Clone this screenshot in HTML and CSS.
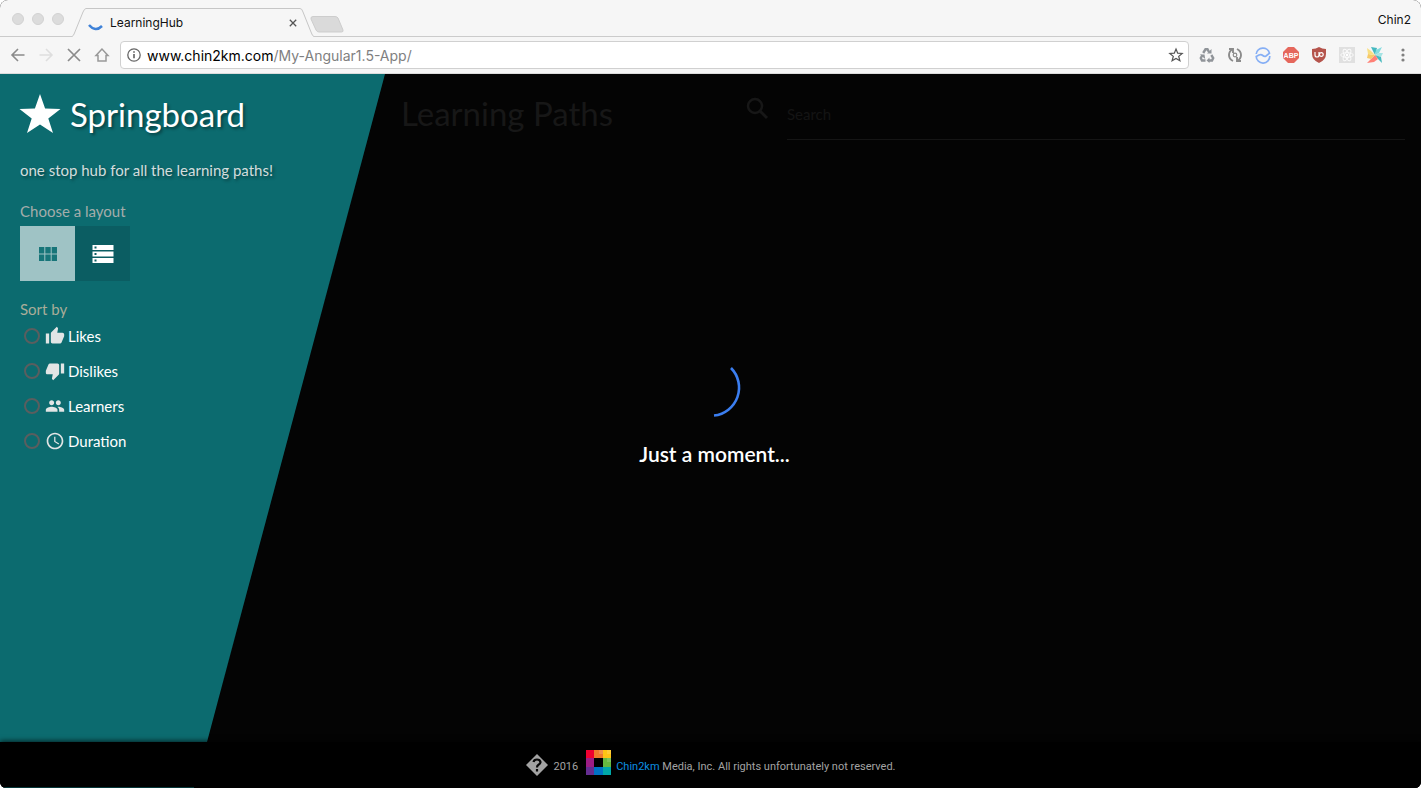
FILE: index.html
```html
<!DOCTYPE html>
<html lang="en">
<head>
<meta charset="utf-8">
<title>LearningHub</title>
<link rel="stylesheet" href="styles.css">
</head>
<body>
<div class="window">
  <div class="titlebar">
    <div class="lights"><span class="light"></span><span class="light"></span><span class="light"></span></div>
    <div class="tab">
      <svg class="tab-shape" width="242" height="29" viewBox="0 0 242 29"><path d="M0 28.5C2 28 3 25 4 22L11 4Q12.500 .5 14 .5H228Q230 .5 231 4L238 22Q240 28 242 28.500V29H0Z" fill="#f6f6f6"/><path d="M0 28.500Q1.500 28 2.500 25L11 4Q12.500 .5 14 .5H228Q230 .5 231 4L239 24Q240.500 28.500 242 28.500" fill="none" stroke="#c6c6c6"/></svg>
      <svg class="tab-icon" width="16" height="16" viewBox="0 0 16 16"><path d="M1 10Q7.500 17.500 14 11" fill="none" stroke="#3f82d8" stroke-width="2.500"/></svg>
      <span class="tab-title">LearningHub</span>
      <button class="tab-close" aria-label="Close tab"><svg width="8" height="8" viewBox="0 0 8 8"><path d="M.8.8l6.400 6.400M7.200.8L.8 7.200" stroke="#555" stroke-width="1.300"/></svg></button>
    </div>
    <button class="new-tab" aria-label="New tab"><svg width="34" height="17" viewBox="0 0 34 17"><path d="M3 .5H25Q27 .5 28 2L33 14Q33.500 16 31.500 16H9Q7 16 6 14L1 3Q.5.5 3 .5Z" fill="#dadada" stroke="#cdcdcd"/></svg></button>
    <span class="profile">Chin2</span>
  </div>
  <div class="toolbar">
    <div class="nav">
      <button aria-label="Back"><svg width="16" height="16" viewBox="0 0 16 16"><path d="M14.500 8H2.500M8 2L2 8l6 6" fill="none" stroke="#8b8b8b" stroke-width="1.600"/></svg></button>
      <button aria-label="Forward"><svg width="16" height="16" viewBox="0 0 16 16"><path d="M1.500 8h12M8 2l6 6-6 6" fill="none" stroke="#dedede" stroke-width="1.600"/></svg></button>
      <button aria-label="Stop"><svg width="16" height="16" viewBox="0 0 16 16"><path d="M2 2l12 12M14 2L2 14" stroke="#8b8b8b" stroke-width="1.700"/></svg></button>
      <button aria-label="Home"><svg width="16" height="16" viewBox="0 0 16 16"><path d="M8 2L2 8.500h2V14h8V8.500h2z" fill="none" stroke="#999" stroke-width="1.500"/></svg></button>
    </div>
    <div class="address">
      <svg width="14" height="14" viewBox="0 0 14 14"><circle cx="7" cy="7" r="6.200" fill="none" stroke="#666" stroke-width="1.300"/><path d="M7 6v4.300M7 3.300v1.500" stroke="#555" stroke-width="1.500"/></svg>
      <a class="url" href="#"><span class="host">www.chin2km.com</span>/My-Angular1.5-App/</a>
      <button aria-label="Bookmark this page"><svg width="14" height="14" viewBox="0 0 14 14"><path d="M7 1l1.700 4.200 4.500.3-3.500 2.900 1.200 4.400L7 10.400l-3.900 2.400 1.200-4.400L.8 5.500l4.500-.3z" fill="none" stroke="#555" stroke-width="1.200"/></svg></button>
    </div>
    <div class="extensions">
      <button aria-label="Recycle"><svg width="16" height="16" viewBox="0 0 16 16" fill="none" stroke="#909499" stroke-width="2.400"><path d="M4.200 6L6.500 2.300h2L10 5M12.300 8l1.900 3-1.200 2.500H10M6.500 13.500H3L1.800 11 3.500 8"/><path d="M8 6.500h4.500V2zM10.500 10.500v5.500L7.500 13.400zM.8 7.500h4.700L6.200 12z" fill="#909499" stroke="none"/></svg></button>
      <button aria-label="Sync"><svg width="16" height="16" viewBox="0 0 16 16" fill="none" stroke="#8b8b8b" stroke-width="1.900"><path d="M6 14Q2 12 2 8t4-6M10 2q4 2 4 6t-4 6M2 2h4v4M14 14h-4v-4"/><circle cx="8" cy="8" r="1.800" stroke-width="1.200"/></svg></button>
      <button aria-label="Waves"><svg width="16" height="16" viewBox="0 0 16 16" fill="none" stroke="#86aff5" stroke-width="1.700"><path d="M1.200 7a6.800 6.800 0 0 1 13.300-.8L11 9Q9.500 10 7.800 8.500T4 8L1.200 9.500a6.800 6.800 0 0 0 13.600-.5"/></svg></button>
      <button aria-label="AdBlock Plus"><svg width="16" height="16" viewBox="0 0 16 16"><path d="M5 0h6l5 5v6l-5 5H5l-5-5V5z" fill="#e5675c"/><text x="8" y="11" text-anchor="middle" class="badge-text">ABP</text></svg></button>
      <button aria-label="uBlock"><svg width="16" height="16" viewBox="0 0 16 16"><path d="M8 0q3 1.800 7 2v5q0 6-7 9-7-3-7-9V2q4-.2 7-2z" fill="#b5544c"/><path d="M4 5v3q0 2 2 2t2-2V5M8.500 7.500a1.800 1.800 0 1 0 3.700 0 1.800 1.800 0 1 0-3.700 0" fill="none" stroke="#fff" stroke-width="1.200"/></svg></button>
      <button aria-label="React tools"><svg width="16" height="16" viewBox="0 0 16 16"><path d="M0 0h16v16H0z" fill="#e0e0e0"/><g fill="none" stroke="#fafafa"><ellipse cx="8" cy="8" rx="6.300" ry="2.400"/><ellipse cx="8" cy="8" rx="6.300" ry="2.400" transform="rotate(60 8 8)"/><ellipse cx="8" cy="8" rx="6.300" ry="2.400" transform="rotate(120 8 8)"/></g><circle cx="8" cy="8" r="1.200" fill="#fff"/></svg></button>
      <button aria-label="Pinwheel"><svg width="18" height="18" viewBox="0 0 18 18"><path d="M5 1l6 1-2 7z" fill="#45b9c0"/><path d="M9 9l1-5 6-3-3 6z" fill="#83dce0"/><path d="M9 9l4-2h4l-2 4z" fill="#a5e4e4"/><path d="M9 9l6 2 1 6-4-4z" fill="#46b9be"/><path d="M9 9l3 4-4 3-7 1 4-4z" fill="#ff8177"/><path d="M9 9l-4 4-4-1 1-4z" fill="#f7ca68"/><path d="M9 9L2 8 1 2l4 3z" fill="#f9df83"/></svg></button>
      <button aria-label="Menu"><svg width="16" height="16" viewBox="0 0 16 16" fill="#808080"><circle cx="8" cy="3" r="1.600"/><circle cx="8" cy="8" r="1.600"/><circle cx="8" cy="13" r="1.600"/></svg></button>
    </div>
  </div>

  <div class="app">
    <aside class="sidebar">
      <h1 class="brand"><svg width="40" height="40" viewBox="0 0 40 40"><path d="M20 0l5.100 14.500L40.500 15 28.300 24.400 33 39 20 30.400 7 39l4.700-14.600L-.5 15l15.400-.5z" fill="#fff"/></svg>Springboard</h1>
      <p class="tagline">one stop hub for all the learning paths!</p>
      <div class="label">Choose a layout</div>
      <div class="layouts">
        <button class="layout selected" aria-label="Grid" aria-pressed="true"><svg width="18" height="14" viewBox="0 0 18 14" fill="#177579"><path d="M0 0h5.300v6.500H0zM6.300 0h5.400v6.500H6.300zM12.700 0H18v6.500h-5.300zM0 7.500h5.300V14H0zM6.300 7.500h5.400V14H6.300zM12.700 7.500H18V14h-5.300z"/></svg></button>
        <button class="layout" aria-label="List" aria-pressed="false"><svg width="22" height="18" viewBox="0 0 22 18"><path d="M.5 0h21v5H.5zM.5 6.500h21v5H.5zM.5 13h21v5H.5z" fill="#fff"/><path d="M2.500 1.500h2v2h-2zM2.500 8h2v2h-2zM2.500 14.500h2v2h-2z" fill="#0b5d62"/></svg></button>
      </div>
      <fieldset class="sort">
        <legend class="label">Sort by</legend>
        <label class="option"><input type="radio" name="sort"><svg width="20" height="20" viewBox="0 0 24 24"><path d="M1 21h4V9H1v12zm22-11c0-1.100-.9-2-2-2h-6.310l.95-4.570.03-.32c0-.41-.17-.79-.44-1.060L14.170 1 7.590 7.590C7.220 7.950 7 8.450 7 9v10c0 1.100.9 2 2 2h9c.83 0 1.540-.5 1.840-1.220l3.020-7.050c.09-.23.14-.47.14-.73v-2z"/></svg>Likes</label>
        <label class="option"><input type="radio" name="sort"><svg width="20" height="20" viewBox="0 0 24 24"><path d="M15 3H6c-.83 0-1.540.5-1.840 1.220l-3.020 7.050c-.09.23-.14.47-.14.73v2c0 1.100.9 2 2 2h6.310l-.95 4.570-.03.32c0 .41.17.79.44 1.060L9.830 23l6.590-6.590c.36-.36.58-.86.58-1.410V5c0-1.100-.9-2-2-2zm4 0v12h4V3h-4z"/></svg>Dislikes</label>
        <label class="option"><input type="radio" name="sort"><svg width="20" height="20" viewBox="0 0 24 24"><path d="M16 11c1.660 0 2.990-1.340 2.990-3S17.660 5 16 5s-3 1.340-3 3 1.340 3 3 3zm-8 0c1.660 0 2.990-1.340 2.990-3S9.660 5 8 5 5 6.340 5 8s1.340 3 3 3zm0 2c-2.330 0-7 1.170-7 3.500V19h14v-2.500c0-2.330-4.670-3.500-7-3.500zm8 0c-.29 0-.62.020-.97.050 1.160.84 1.970 1.970 1.970 3.450V19h6v-2.500c0-2.330-4.670-3.500-7-3.500z"/></svg>Learners</label>
        <label class="option"><input type="radio" name="sort"><svg width="20" height="20" viewBox="0 0 24 24"><path d="M12 2C6.500 2 2 6.500 2 12s4.500 10 10 10 10-4.500 10-10S17.500 2 12 2zm0 18c-4.400 0-8-3.600-8-8s3.600-8 8-8 8 3.600 8 8-3.600 8-8 8zm.5-13H11v6l5.200 3.200.8-1.300-4.500-2.700z"/></svg>Duration</label>
      </fieldset>
    </aside>
    <main class="content">
      <h2 class="heading">Learning Paths</h2>
      <div class="search">
        <svg width="24" height="24" viewBox="0 0 24 24"><circle cx="9" cy="9" r="7" fill="none" stroke="#171717" stroke-width="2.500"/><path d="M14 14l7 7" stroke="#171717" stroke-width="3"/></svg>
        <input type="text" placeholder="Search" aria-label="Search">
      </div>
    </main>
    <div class="loading" role="status">
      <svg width="60" height="60" viewBox="0 0 60 60"><path d="M50 10A28 28 0 0 1 33 57.500" fill="none" stroke="#3b7ef0" stroke-width="2.600"/></svg>
      <div class="loading-text">Just a moment...</div>
    </div>
  </div>

  <footer class="footer">
    <svg width="24" height="24" viewBox="0 0 24 24"><path d="M12 1l11 11-11 11L1 12z" fill="#a3a3a3"/><path d="M8.500 9Q9 6.500 12 6.500t3.500 2.500q0 1.700-2 2.800Q12 12.600 12 14.500M12 16v2.500" fill="none" stroke="#080808" stroke-width="2.200"/></svg>
    <span class="year">2016</span>
    <svg class="mosaic" width="25" height="25" viewBox="0 0 25 25" shape-rendering="crispEdges"><path d="M0 0h8v8H0z" fill="#ef0030"/><path d="M8 0h9v8H8z" fill="#ef792c"/><path d="M17 0h8v8h-8z" fill="#ffc414"/><path d="M0 8h8v9H0z" fill="#9d1d84"/><path d="M17 8h8v9h-8z" fill="#66b83f"/><path d="M0 17h8v8H0z" fill="#652d91"/><path d="M8 17h9v8H8z" fill="#0072c5"/><path d="M17 17h8v8h-8z" fill="#00a8a8"/><path d="M13 0h4v4h-4zM21 0h4v4h-4zM21 8h4v4h-4z" fill="#fff" opacity=".15"/></svg>
    <span><a href="#">Chin2km</a> Media, Inc. All rights unfortunately not reserved.</span>
  </footer>
</div>
</body>
</html>
```
FILE: styles.css
```css
* { box-sizing: border-box; }
body { margin: 0; background: #fff; font-family: Lato, "Liberation Sans", sans-serif; }
button { margin: 0; padding: 0; border: 0; background: none; display: flex; align-items: center; justify-content: center; }
a { color: inherit; text-decoration: none; }
svg { display: block; flex: none; overflow: visible; }

.window { min-height: 100vh; display: flex; flex-direction: column; border-radius: 8px 8px 6px 6px; overflow: hidden; background: #040404; }

.titlebar { height: 37px; flex: none; display: flex; align-items: flex-end; padding: 0 10px 0 12px; background: #f6f6f6; box-shadow: inset 0 -1px #cbcbcb; font-family: Inter, sans-serif; font-size: 12px; color: #111; }
.lights { display: flex; gap: 8px; height: 37px; align-items: center; margin-right: 8px; }
.light { width: 12px; height: 12px; border-radius: 50%; background: #dcdcdc; border: 1px solid #d2d2d2; }
.tab { position: relative; width: 242px; height: 29px; display: flex; align-items: center; padding: 0 17px 0 16px; }
.tab-shape { position: absolute; left: 0; top: 0; }
.tab-icon, .tab-title, .tab-close { position: relative; }
.tab-title { flex: 1; margin-left: 6px; }
.new-tab { height: 26px; align-items: flex-start; margin-left: -4px; padding-top: 5px; }
.profile { margin-left: auto; height: 37px; line-height: 39px; }

.toolbar { height: 37px; flex: none; display: flex; align-items: center; gap: 10px; padding: 0 10px; background: #f6f6f6; border-bottom: 1px solid #dcdcdc; }
.nav { display: flex; gap: 12px; }
.address { flex: 1; height: 28px; display: flex; align-items: center; gap: 6px; padding: 0 5px 0 6px; background: #fff; border: 1px solid #d0d0d0; border-radius: 4px; }
.url { flex: 1; font-family: Inter, sans-serif; font-size: 14px; color: #808080; }
.host { color: #000; }
.extensions { display: flex; align-items: center; gap: 12px; }
.extensions button { width: 16px; }
.badge-text { font: bold 7px "Liberation Sans", sans-serif; fill: #fff; }

.app { flex: 1; position: relative; display: flex; }
.sidebar { width: 385px; flex: none; padding: 20px; background: #0c6b6f; clip-path: polygon(0 0, 100% 0, 207px 100%, 0 100%); color: #fff; font-size: 15px; }
.brand { margin: 0; display: flex; align-items: center; gap: 10px; height: 40px; line-height: 40px; font-size: 33px; font-weight: 400; text-shadow: 2px 2px 3px rgba(0, 0, 0, .4); }
.tagline { margin: 25px 0 0; line-height: 22px; color: #d3dddd; text-shadow: 2px 2px 3px rgba(0, 0, 0, .4); }
.label { padding: 0; line-height: 18px; color: #a4adab; }
.tagline + .label { margin-top: 21px; }
.layouts { display: flex; margin-top: 6px; }
.layout { width: 55px; height: 55px; background: #0b5d62; }
.layout.selected { background: #9fc3c5; }
.sort { margin: 19px 0 0; padding: 0; border: 0; }
.sort .label { color: #a9ad99; }
.option { display: flex; align-items: center; height: 35px; padding-left: 4px; }
.option input { appearance: none; width: 16px; height: 16px; margin: 0 5px 0 0; border: 2px solid #5a5e5f; border-radius: 50%; }
.option svg { margin-right: 3px; fill: #e2e5e5; }

.content { flex: 1; display: grid; grid-template-columns: 345px 1fr; align-items: start; padding: 16px; }
.heading { margin: 0; line-height: 46px; font-size: 33px; font-weight: 400; color: #171717; }
.search { display: flex; gap: 17px; padding-top: 7px; }
.search input { flex: 1; min-width: 0; height: 43px; padding: 0 0 8px; border: 0; border-bottom: 1px solid #151515; background: none; font: 15px Lato, sans-serif; color: #777; outline: 0; }
.search input::placeholder { color: #141414; opacity: 1; }

.loading { position: absolute; inset: 0; display: flex; flex-direction: column; align-items: center; justify-content: center; gap: 22px; padding-top: 10px; pointer-events: none; }
.loading-text { padding-left: 8px; line-height: 28px; font-size: 21px; font-weight: 600; color: #fff; }

.footer { position: relative; height: 46px; flex: none; display: flex; align-items: center; justify-content: center; background: linear-gradient(90deg, #07383a 194px, #000 194px) bottom / 100% 1px no-repeat #000; box-shadow: 0 -1px 5px rgba(0, 0, 0, .7); color: #a3a3a3; font-family: Roboto, sans-serif; font-size: 11px; line-height: 20px; }
.footer span { padding-top: 4px; }
.year { margin: 0 8px 0 4px; }
.mosaic { margin: 0 5px 6px 0; }
.footer a { color: #0c8fe0; }
```
